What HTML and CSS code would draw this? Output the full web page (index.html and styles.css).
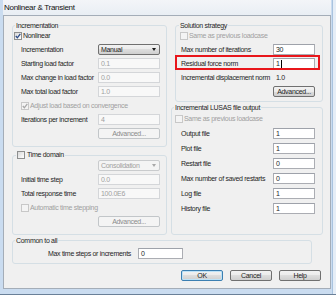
FILE: index.html
```html
<!DOCTYPE html>
<html lang="en">

<head>
    <meta charset="UTF-8">
    <meta name="viewport" content="width=device-width, initial-scale=1.0">
    <title>Nonlinear &amp; Transient</title>
    <link rel="stylesheet" href="styles.css">
</head>

<body>
    <div class="window">
        <div class="titlebar">Nonlinear &amp; Transient</div>
        <div class="client">
            <div class="columns">
                <div class="col left">
                    <fieldset class="group incr">
                        <legend>Incrementation</legend>
                        <div class="stack">
                            <div class="check"><span class="box"><svg viewBox="0 0 6 6" width="6" height="6"><polyline points="0.8,3 2.4,4.8 5.3,0.9" /></svg></span>Nonlinear</div>
                            <div class="row"><span class="lbl">Incrementation</span><span class="combo">Manual<i class="arrow"></i></span></div>
                            <div class="row"><span class="lbl">Starting load factor</span><span class="field off">0.1</span></div>
                            <div class="row"><span class="lbl">Max change in load factor</span><span class="field off">0.0</span></div>
                            <div class="row"><span class="lbl">Max total load factor</span><span class="field off">1.0</span></div>
                            <div class="check off sub"><span class="box"><svg viewBox="0 0 6 6" width="6" height="6"><polyline points="0.8,3 2.4,4.8 5.3,0.9" /></svg></span>Adjust load based on convergence</div>
                            <div class="row"><span class="lbl">Iterations per increment</span><span class="field off">4</span></div>
                            <div class="row"><span class="lbl"></span><span class="btn off">Advanced...</span></div>
                        </div>
                    </fieldset>

                    <fieldset class="group time">
                        <legend><span class="box"></span>Time domain</legend>
                        <div class="stack">
                            <div class="row"><span class="lbl"></span><span class="combo off">Consolidation<i class="arrow"></i></span></div>
                            <div class="row"><span class="lbl">Initial time step</span><span class="field off">0.0</span></div>
                            <div class="row"><span class="lbl">Total response time</span><span class="field off">100.0E6</span></div>
                            <div class="check off sub"><span class="box"></span>Automatic time stepping</div>
                            <div class="row"><span class="lbl"></span><span class="btn off">Advanced...</span></div>
                        </div>
                    </fieldset>
                </div>

                <div class="col right">
                    <fieldset class="group solution">
                        <legend>Solution strategy</legend>
                        <div class="stack">
                            <div class="check off"><span class="box"></span>Same as previous loadcase</div>
                            <div class="row"><span class="lbl">Max number of iterations</span><span class="field">30</span></div>
                            <div class="row marked">
                                <span class="lbl">Residual force norm</span><span class="field">1<i class="caret"></i></span>
                                <span class="mark"></span>
                            </div>
                            <div class="row"><span class="lbl">Incremental displacement norm</span><span class="field flat">1.0</span></div>
                            <div class="row"><span class="lbl"></span><span class="btn">Advanced...</span></div>
                        </div>
                    </fieldset>

                    <fieldset class="group lusas">
                        <legend>Incremental LUSAS file output</legend>
                        <div class="stack">
                            <div class="check off"><span class="box"></span>Same as previous loadcase</div>
                            <div class="row"><span class="lbl">Output file</span><span class="field">1</span></div>
                            <div class="row"><span class="lbl">Plot file</span><span class="field">1</span></div>
                            <div class="row"><span class="lbl">Restart file</span><span class="field">0</span></div>
                            <div class="row"><span class="lbl">Max number of saved restarts</span><span class="field">0</span></div>
                            <div class="row"><span class="lbl">Log file</span><span class="field">1</span></div>
                            <div class="row"><span class="lbl">History file</span><span class="field">1</span></div>
                        </div>
                    </fieldset>
                </div>
            </div>

            <fieldset class="group common">
                <legend>Common to all</legend>
                <div class="stack">
                    <div class="row"><span class="lbl">Max time steps or increments</span><span class="field">0</span></div>
                </div>
            </fieldset>

            <div class="buttons">
                <span class="btn default">OK</span>
                <span class="btn">Cancel</span>
                <span class="btn">Help</span>
            </div>
        </div>
    </div>
</body>

</html>
```

FILE: styles.css
```css
body {
    margin: 0;
    font-family: "Liberation Sans", Arial, sans-serif;
    font-size: 7px;
    letter-spacing: -0.3px;
    color: #1e1e1e;
}

.window {
    width: 336px;
    height: 295px;
    box-sizing: border-box;
    display: flex;
    flex-direction: column;
    padding: 0 5px 5px 3px;
    background: #cadcf0;
    border-bottom: 1px solid #6a8098;
    box-shadow: inset -3px 0 0 #e6eef7, inset -4px 0 0 #a9c3df;
}

.titlebar {
    height: 15px;
    line-height: 15px;
    padding-left: 1px;
    font-size: 8px;
    color: #111;
    background: linear-gradient(#f3f5f8, #e9eef4);
}

.client {
    flex: 1;
    border: 1px solid #a4adb8;
    background: #f0f0f0;
    padding: 5px 7px 0 8px;
}

.columns {
    display: grid;
    grid-template-columns: 155px 1fr;
    column-gap: 4px;
}

.col {
    display: flex;
    flex-direction: column;
}

/* group boxes */
.group {
    margin: 0;
    padding: 0;
    min-width: 0;
    border: 1px solid #d5dfe5;
    border-radius: 3px;
}

.group legend {
    margin-left: 2px;
    padding: 0 1px;
    line-height: 9px;
}

.stack {
    display: flex;
    flex-direction: column;
    gap: 3px;
}

.row,
.check {
    height: 11px;
    display: flex;
    align-items: center;
}

.lbl {
    flex: none;
    white-space: nowrap;
}

/* left column */
.incr .stack {
    padding: 0 0 7px 1px;
}

.time {
    margin-top: 3px;
}

.time legend {
    margin-left: 3px;
    line-height: 10px;
    display: flex;
    align-items: center;
}

.time .stack {
    padding: 0 0 7px 1px;
}

.left .row,
.left .sub {
    margin-left: 7px;
}

.left .lbl {
    width: 77px;
}

.left .field,
.left .combo,
.left .btn {
    width: 62px;
}

/* right column */
.solution {
    margin-left: 4px;
}

.solution legend {
    margin-left: 3px;
}

.solution .stack {
    padding: 0 6px 4px 4px;
}

.solution .row {
    margin-left: 1px;
}

.lusas {
    flex: 1;
    margin-top: 1px;
}

.lusas .stack {
    padding: 1px 6px 0 3px;
    gap: 4px;
}

.lusas .row {
    margin-left: 6px;
}

.right .lbl {
    width: 92px;
}

.right .field,
.right .btn {
    width: 42px;
}

/* bottom */
.common {
    margin: 1px 11px 0 0;
}

.common .stack {
    padding: 3px 0 4px 35px;
}

.common .lbl {
    width: 90px;
}

.common .field {
    width: 45px;
}

.buttons {
    display: flex;
    justify-content: flex-end;
    gap: 7px;
    margin: 6px 2px 0 0;
}

.buttons .btn {
    width: 42px;
}

/* controls */
.field {
    box-sizing: border-box;
    height: 11px;
    line-height: 9px;
    border: 1px solid #abadb3;
    border-top-color: #9ea2aa;
    background: #fff;
    padding-left: 2px;
    display: flex;
    align-items: center;
}

.field.off {
    border-color: #d4d6d9;
    background: #f8f8f8;
    color: #a0a0a0;
}

.field.flat {
    border-color: transparent;
    background: transparent;
}

.caret {
    width: 1px;
    height: 8px;
    margin-left: 1px;
    background: #000;
}

.combo {
    box-sizing: border-box;
    height: 11px;
    border: 1px solid #707070;
    border-radius: 2px;
    background: linear-gradient(#f2f2f2, #ebebeb 50%, #dddddd 50%, #cfcfcf);
    display: flex;
    align-items: center;
    justify-content: space-between;
    padding: 0 3px 0 2px;
}

.combo.off {
    border-color: #c9cbcd;
    background: #f4f4f4;
    color: #a0a0a0;
}

.arrow {
    width: 0;
    height: 0;
    border-left: 2.5px solid transparent;
    border-right: 2.5px solid transparent;
    border-top: 3px solid #1a1a1a;
}

.combo.off .arrow {
    border-top-color: #a8a8a8;
}

.btn {
    box-sizing: border-box;
    height: 11px;
    border: 1px solid #707070;
    border-radius: 2px;
    background: linear-gradient(#f2f2f2, #ebebeb 50%, #dddddd 50%, #cfcfcf);
    display: flex;
    align-items: center;
    justify-content: center;
}

.btn.off {
    border-color: #c2c6c9;
    background: #f4f4f4;
    color: #8a8a8a;
}

.btn.default {
    border-color: #3c7fb1;
    box-shadow: inset 0 0 0 1px #bde2f7;
}

.box {
    box-sizing: border-box;
    flex: none;
    width: 8px;
    height: 8px;
    margin-right: 1px;
    border: 1px solid #8e8f8f;
    background: linear-gradient(135deg, #d8d8d8, #ffffff);
    display: inline-flex;
    align-items: center;
    justify-content: center;
}

.box svg polyline {
    fill: none;
    stroke: #2a4a86;
    stroke-width: 1.3;
}

.time legend .box {
    margin-right: 2px;
}

.check.off {
    color: #a0a0a0;
}

.check.off .box {
    border-color: #c8c8c8;
    background: #f4f4f4;
}

.check.off .box svg polyline {
    stroke: #a8a8a8;
}

/* red annotation frame drawn over the dialog */
.marked {
    position: relative;
}

.mark {
    position: absolute;
    left: -6px;
    right: -4px;
    top: -3px;
    bottom: -1px;
    border: 2px solid #e8161b;
}
```
